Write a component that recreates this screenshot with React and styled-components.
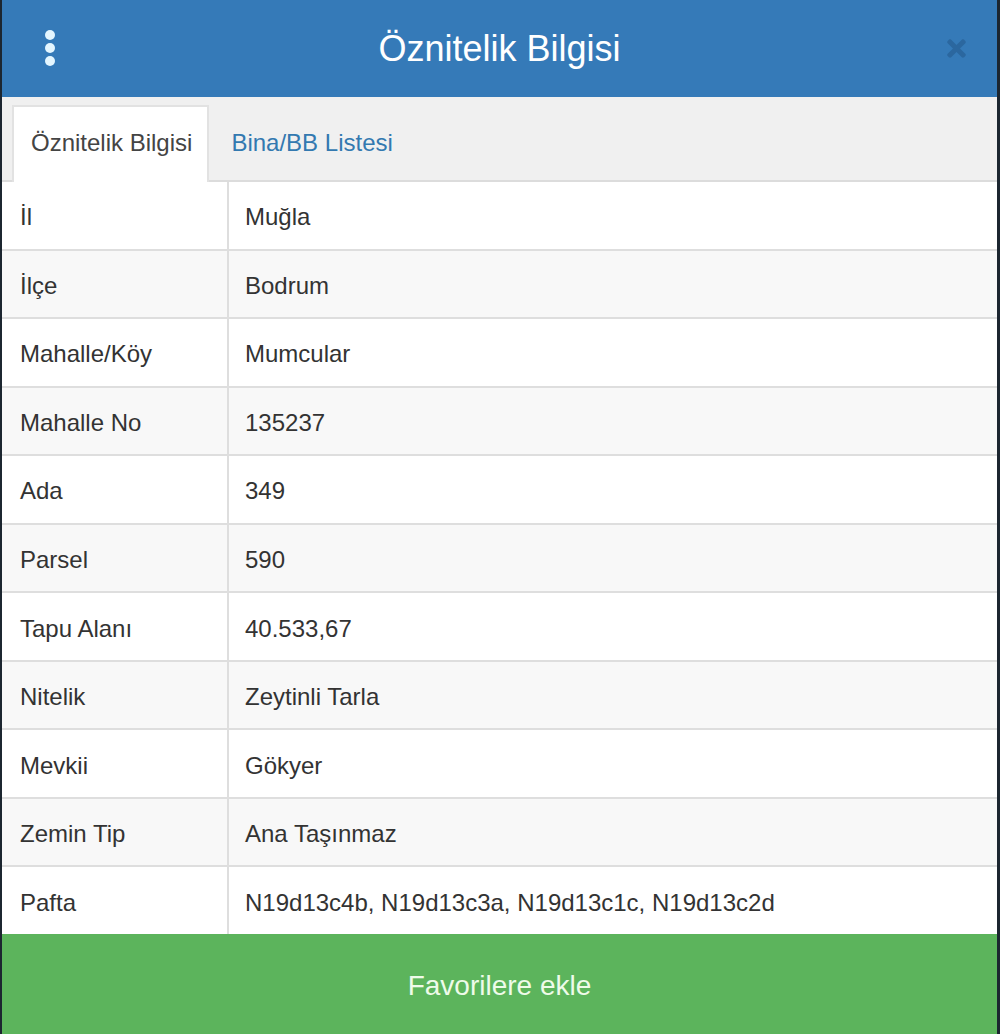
import React from "react";
import styled, { createGlobalStyle } from "styled-components";
import { FaTimes } from "react-icons/fa";

const rows = [
  ["İl", "Muğla"],
  ["İlçe", "Bodrum"],
  ["Mahalle/Köy", "Mumcular"],
  ["Mahalle No", "135237"],
  ["Ada", "349"],
  ["Parsel", "590"],
  ["Tapu Alanı", "40.533,67"],
  ["Nitelik", "Zeytinli Tarla"],
  ["Mevkii", "Gökyer"],
  ["Zemin Tip", "Ana Taşınmaz"],
  ["Pafta", "N19d13c4b, N19d13c3a, N19d13c1c, N19d13c2d"],
];

const App = () => {
  return (
    <>
      <Global />
      <Panel>
        <Header>
          <Dots>
            <span />
            <span />
            <span />
          </Dots>
          <Title>Öznitelik Bilgisi</Title>
          <Close>
            <FaTimes />
          </Close>
        </Header>
        <Tabs>
          <Tab active>Öznitelik Bilgisi</Tab>
          <Tab>Bina/BB Listesi</Tab>
        </Tabs>
        <Table>
          {rows.map(([k, v], i) => (
            <Row key={k} striped={i % 2 === 1}>
              <Label>{k}</Label>
              <Value>{v}</Value>
            </Row>
          ))}
        </Table>
        <Button>Favorilere ekle</Button>
      </Panel>
    </>
  );
};

const Global = createGlobalStyle`
  html, body {
    margin: 0;
    padding: 0;
    background: #1c2630;
  }
  body {
    font-family: "Liberation Sans", Arial, sans-serif;
  }
`;

const Panel = styled("div")`
  display: flex;
  flex-direction: column;
  height: 1034px;
  margin: 0 3px 0 2px;
  background: #fff;
`;

const Header = styled("div")`
  position: relative;
  display: flex;
  align-items: center;
  justify-content: center;
  height: 97px;
  flex-shrink: 0;
  background: #357ab8;
`;

const Title = styled("h1")`
  margin: 0;
  font-size: 36px;
  font-weight: 400;
  color: #fff;
`;

const Dots = styled("div")`
  position: absolute;
  left: 43px;
  top: 30px;
  display: flex;
  flex-direction: column;
  gap: 3px;
  & span {
    width: 10px;
    height: 10px;
    border-radius: 50%;
    background: #e4f6ff;
  }
`;

const Close = styled("div")`
  position: absolute;
  right: 27px;
  top: 35px;
  font-size: 27px;
  line-height: 0;
  color: #2b679f;
`;

const Tabs = styled("div")`
  display: flex;
  align-items: flex-end;
  height: 85px;
  flex-shrink: 0;
  box-sizing: border-box;
  padding: 6px 0 0 10px;
  background: #f0f0f0;
  border-bottom: 2px solid #dcdcdc;
`;

const Tab = styled("div")`
  display: flex;
  align-items: center;
  height: 100%;
  box-sizing: border-box;
  margin-bottom: -2px;
  padding: 0 15px 4px ${(p) => (p.active ? "17px" : "20px")};
  font-size: 24px;
  color: ${(p) => (p.active ? "#444" : "#3379b0")};
  background: ${(p) => (p.active ? "#fff" : "transparent")};
  border: 2px solid ${(p) => (p.active ? "#e2e2e2" : "transparent")};
  border-bottom: none;
`;

const Table = styled("div")`
  flex: 1;
  display: flex;
  flex-direction: column;
`;

const Row = styled("div")`
  flex: 1;
  display: grid;
  grid-template-columns: 227px 1fr;
  background: ${(p) => (p.striped ? "#f8f8f8" : "#fff")};
  border-bottom: 2px solid #dedede;
  &:last-child {
    border-bottom: none;
  }
`;

const Cell = styled("div")`
  display: flex;
  align-items: center;
  padding: 4px 0 0 18px;
  font-size: 24px;
  color: #333;
`;

const Label = styled(Cell)`
  border-right: 2px solid #dedede;
`;

const Value = styled(Cell)`
  padding-left: 16px;
`;

const Button = styled("div")`
  display: flex;
  align-items: center;
  justify-content: center;
  height: 100px;
  flex-shrink: 0;
  padding-top: 3px;
  box-sizing: border-box;
  background: #5cb45c;
  font-size: 28px;
  color: #eefbe9;
`;

export default App;
